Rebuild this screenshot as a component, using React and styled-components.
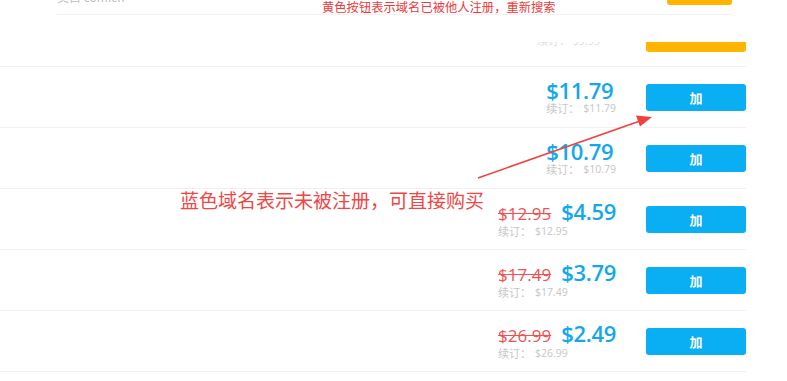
import React from 'react'
import styled, { createGlobalStyle } from 'styled-components'

const rows = [
  { price: '$11.79', renew: '$11.79' },
  { price: '$10.79', renew: '$10.79' },
  { old: '$12.95', price: '$4.59', renew: '$12.95' },
  { old: '$17.49', price: '$3.79', renew: '$17.49' },
  { old: '$26.99', price: '$2.49', renew: '$26.99' },
]

export default function App () {
  return (
    <Page>
      <GlobalStyle />
      <Header>
        <HeaderRow>
          <FadedClip>
            <FadedText>卖自 com.cn</FadedText>
          </FadedClip>
          <Spacer />
          <TakenStub />
        </HeaderRow>
      </Header>

      <List>
        <ClippedRow>
          <ClippedRenew>续订： $9.99</ClippedRenew>
          <TakenButton />
        </ClippedRow>
        {rows.map((r, i) => (
          <Row key={i}>
            <PriceBlock>
              <PriceLine>
                {r.old && <OldPrice>{r.old}</OldPrice>}
                <Price>{r.price}</Price>
              </PriceLine>
              <Renew>
                续订：<RenewAmount>{r.renew}</RenewAmount>
              </Renew>
            </PriceBlock>
            <AddButton>加</AddButton>
          </Row>
        ))}
      </List>

      <TopNote>黄色按钮表示域名已被他人注册，重新搜索</TopNote>
      <Note>蓝色域名表示未被注册，可直接购买</Note>
      <Arrow width="787" height="381" viewBox="0 0 787 381">
        <line x1="478" y1="178" x2="640" y2="121" stroke="#f2403f" strokeWidth="1.6" />
        <polygon points="652,117 636,115.5 640,126.5" fill="#f2403f" />
      </Arrow>
    </Page>
  )
}

const GlobalStyle = createGlobalStyle`
  body {
    margin: 0;
    background: #fff;
    font-family: "Open Sans", "Noto Sans CJK SC", sans-serif;
  }
`

const Page = styled.div`
  position: relative;
  width: 787px;
  height: 381px;
  overflow: hidden;
  background: #fff;
`

const Header = styled.div`
  height: 42px;
  background: #fff;
`

const HeaderRow = styled.div`
  display: flex;
  align-items: flex-start;
  margin-left: 57px;
  width: 675px;
  height: 14px;
  border-bottom: 1px solid #f2f2f2;
`

const FadedClip = styled.div`
  height: 3px;
  overflow: hidden;
`

const FadedText = styled.div`
  margin-top: -9px;
  font-family: "Noto Sans CJK SC", sans-serif;
  font-size: 12px;
  line-height: 12px;
  color: #bdbdbd;
`

const Spacer = styled.div`
  flex: 1;
`

const TakenStub = styled.div`
  width: 65px;
  height: 5px;
  background: #ffb400;
  border-radius: 0 0 3px 3px;
`

const List = styled.div`
  width: 746px;
`

const ClippedRow = styled.div`
  display: flex;
  justify-content: flex-end;
  align-items: flex-end;
  height: 10px;
  padding-bottom: 14px;
  overflow: hidden;
  border-bottom: 1px solid #f0f0f0;
`

const ClippedRenew = styled.div`
  font-family: "Noto Sans CJK SC", sans-serif;
  font-size: 11px;
  line-height: 11px;
  color: #dedede;
  margin-right: 46px;
  margin-bottom: 6px;
  white-space: nowrap;
`

const TakenButton = styled.div`
  flex: none;
  width: 100px;
  height: 27px;
  background: #ffb400;
  border-radius: 3px;
`

const Row = styled.div`
  display: flex;
  justify-content: flex-end;
  align-items: center;
  height: 60px;
  border-bottom: 1px solid #f0f0f0;
`

const PriceBlock = styled.div`
  display: flex;
  flex-direction: column;
  align-items: flex-start;
  margin-right: 30px;
`

const PriceLine = styled.div`
  display: flex;
  align-items: baseline;
  gap: 10px;
`

const OldPrice = styled.span`
  font-size: 17px;
  line-height: 20px;
  color: #f05252;
  text-decoration: line-through;
`

const Price = styled.span`
  font-size: 22px;
  line-height: 21px;
  font-weight: 600;
  color: #13a8ec;
  letter-spacing: -0.3px;
`

const Renew = styled.div`
  display: flex;
  gap: 4px;
  font-family: "Noto Sans CJK SC", sans-serif;
  font-size: 11px;
  line-height: 12px;
  color: #c6c6c6;
  margin-top: 1px;
`

const RenewAmount = styled.span`
  font-family: "Open Sans", sans-serif;
  font-size: 10.5px;
`

const AddButton = styled.button`
  flex: none;
  width: 100px;
  height: 27px;
  border: none;
  border-radius: 3px;
  background: #0aaef2;
  color: #fff;
  font-family: "Noto Sans CJK SC", sans-serif;
  font-size: 13px;
  font-weight: 700;
  padding: 0;
`

const TopNote = styled.div`
  position: absolute;
  left: 322px;
  top: 0;
  font-family: "Noto Sans CJK SC", sans-serif;
  font-size: 12.3px;
  line-height: 15px;
  color: #ec3b3b;
  white-space: nowrap;
`

const Note = styled.div`
  position: absolute;
  left: 180px;
  top: 189px;
  font-family: "Noto Sans CJK SC", sans-serif;
  font-size: 19px;
  line-height: 22px;
  color: #f24545;
  white-space: nowrap;
`

const Arrow = styled.svg`
  position: absolute;
  left: 0;
  top: 0;
  pointer-events: none;
`
